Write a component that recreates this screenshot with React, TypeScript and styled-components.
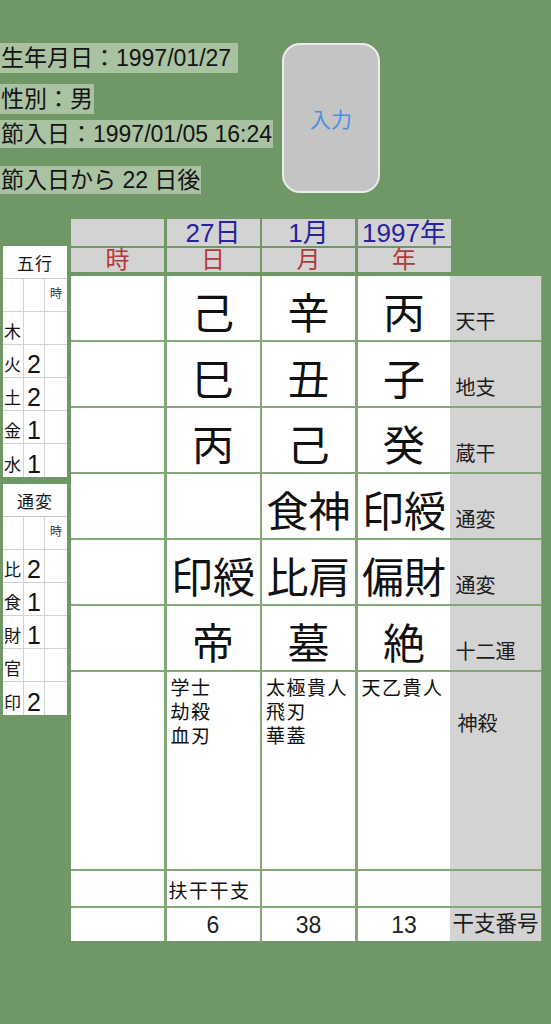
import styled, { createGlobalStyle } from 'styled-components';

const GlobalStyle = createGlobalStyle`
  html, body {
    margin: 0;
    padding: 0;
    background: #6f9866;
  }
  body {
    font-family: 'Liberation Sans', 'Noto Sans CJK JP', sans-serif;
    color: #141414;
  }
  * {
    box-sizing: border-box;
  }
`;

const header = ['', '27日', '1月', '1997年'];
const pillars = ['時', '日', '月', '年'];

const bigRows = [
	{ cells: ['', '己', '辛', '丙'], label: '天干' },
	{ cells: ['', '巳', '丑', '子'], label: '地支' },
	{ cells: ['', '丙', '己', '癸'], label: '蔵干' },
	{ cells: ['', '', '食神', '印綬'], label: '通変' },
	{ cells: ['', '印綬', '比肩', '偏財'], label: '通変' },
	{ cells: ['', '帝', '墓', '絶'], label: '十二運' },
];

const shinsatsu = [[], ['学士', '劫殺', '血刃'], ['太極貴人', '飛刃', '華蓋'], ['天乙貴人']];
const fukan = ['', '扶干干支', '', ''];
const numbers = ['', '6', '38', '13'];

const gogyo = [
	['木', ''],
	['火', '2'],
	['土', '2'],
	['金', '1'],
	['水', '1'],
];

const tsuhen = [
	['比', '2'],
	['食', '1'],
	['財', '1'],
	['官', ''],
	['印', '2'],
];

type SideProps = {
	title: string;
	items: string[][];
};

const SideTable = ({ title, items }: SideProps) => {
	return (
		<SideBox>
			<SideHead>{title}</SideHead>
			<SideGrid>
				<SideCell />
				<SideCell />
				<SideCell $small>時</SideCell>
				{items.map(([name, count]) => (
					<>
						<SideCell key={name}>{name}</SideCell>
						<SideCell $count>{count}</SideCell>
						<SideCell />
					</>
				))}
			</SideGrid>
		</SideBox>
	);
};

const App = () => {
	return (
		<>
			<GlobalStyle />
			<Page>
				<TopSection>
					<InfoColumn>
						<InfoLine $mt={0} $pr={7}>
							生年月日：1997/01/27
						</InfoLine>
						<InfoLine $mt={11}>性別：男</InfoLine>
						<InfoLine $mt={6} $h={28}>
							節入日：1997/01/05 16:24
						</InfoLine>
						<InfoLine $mt={18} $h={28}>
							節入日から 22 日後
						</InfoLine>
					</InfoColumn>
					<InputButton>入力</InputButton>
				</TopSection>

				<MainSection>
					<LeftColumn>
						<SideTable title='五行' items={gogyo} />
						<SideTable title='通変' items={tsuhen} />
					</LeftColumn>

					<Table>
						<HeadRow>
							{header.map((h, i) => (
								<DateCell key={i}>{h}</DateCell>
							))}
						</HeadRow>
						<PillarRow>
							{pillars.map((p) => (
								<PillarCell key={p}>{p}</PillarCell>
							))}
						</PillarRow>

						<Body>
							{bigRows.map((row, r) => (
								<Row key={r} $h={64}>
									<Cells>
										{row.cells.map((c, i) => (
											<BigCell key={i}>{c}</BigCell>
										))}
									</Cells>
									<Label $pt={34}>{row.label}</Label>
								</Row>
							))}

							<Row $h={197}>
								<Cells>
									{shinsatsu.map((list, i) => (
										<ListCell key={i}>
											{list.map((s) => (
												<div key={s}>{s}</div>
											))}
										</ListCell>
									))}
								</Cells>
								<Label $pt={40} $pl={8}>
									神殺
								</Label>
							</Row>

							<Row $h={35}>
								<Cells>
									{fukan.map((f, i) => (
										<TextCell key={i}>{f}</TextCell>
									))}
								</Cells>
								<Label $pt={5} />
							</Row>

							<Row $h={33}>
								<Cells>
									{numbers.map((n, i) => (
										<NumberCell key={i}>{n}</NumberCell>
									))}
								</Cells>
								<Label $pt={4} $pl={3} $size={21.5}>
									干支番号
								</Label>
							</Row>
						</Body>
					</Table>
				</MainSection>
			</Page>
		</>
	);
};

export default App;

const Page = styled.div`
	width: 551px;
	min-height: 1024px;
	padding-top: 43px;
	background: #6f9866;
`;

const TopSection = styled.div`
	display: flex;
	align-items: flex-start;
`;

const InfoColumn = styled.div`
	width: 282px;
	display: flex;
	flex-direction: column;
	align-items: flex-start;
`;

const InfoLine = styled.div<{ $mt: number; $h?: number; $pr?: number }>`
	margin-top: ${(p) => p.$mt}px;
	height: ${(p) => p.$h ?? 30}px;
	line-height: ${(p) => p.$h ?? 30}px;
	padding: 0 ${(p) => p.$pr ?? 1}px 0 1px;
	font-size: 23px;
	white-space: nowrap;
	background: #a9c2a1;
	color: #141414;
`;

const InputButton = styled.div`
	width: 98px;
	height: 150px;
	display: flex;
	justify-content: center;
	align-items: center;
	border: 2px solid #ececec;
	border-radius: 18px;
	background: #c4c4c4;
	color: #4a8fe0;
	font-size: 21px;
`;

const MainSection = styled.div`
	display: flex;
	align-items: flex-start;
	gap: 4px;
	margin-top: 25px;
	padding-left: 3px;
`;

const LeftColumn = styled.div`
	display: flex;
	flex-direction: column;
	gap: 7px;
	margin-top: 27px;
`;

const SideBox = styled.div`
	width: 64px;
	background: #ffffff;
`;

const SideHead = styled.div`
	height: 33px;
	display: flex;
	justify-content: center;
	align-items: center;
	border-bottom: 1px solid #c8c8c8;
	font-size: 17px;
	letter-spacing: 1px;
`;

const SideGrid = styled.div`
	display: grid;
	grid-template-columns: 21px 21px 22px;
	grid-auto-rows: 33px;
`;

const SideCell = styled.div<{ $small?: boolean; $count?: boolean }>`
	display: flex;
	align-items: ${(p) => (p.$small ? 'center' : 'flex-end')};
	justify-content: ${(p) => (p.$count || p.$small ? 'center' : 'flex-start')};
	padding-bottom: ${(p) => (p.$count ? 0 : 3)}px;
	padding-left: ${(p) => (p.$count || p.$small ? 0 : 1)}px;
	border-right: 1px solid #d2d2d2;
	border-bottom: 1px solid #d2d2d2;
	font-size: ${(p) => (p.$small ? 12 : p.$count ? 25 : 17)}px;
	line-height: 1;
	color: ${(p) => (p.$small ? '#333' : '#141414')};

	&:nth-child(3n) {
		border-right: none;
	}
	&:nth-last-child(-n + 3) {
		border-bottom: none;
	}
`;

const Table = styled.div`
	width: 471px;
	display: flex;
	flex-direction: column;
`;

const HeadRow = styled.div`
	display: grid;
	grid-template-columns: repeat(4, 93px);
	column-gap: 2.5px;
	height: 26.5px;
`;

const DateCell = styled.div`
	display: flex;
	justify-content: center;
	align-items: flex-end;
	background: #d3d3d3;
	color: #25249a;
	font-size: 26px;
	line-height: 1;
	white-space: nowrap;
	overflow: visible;
`;

const PillarRow = styled(HeadRow)`
	height: 24px;
	margin-top: 2.5px;
`;

const PillarCell = styled.div`
	display: flex;
	justify-content: center;
	align-items: center;
	background: #d3d3d3;
	color: #b23a3c;
	font-size: 24px;
	line-height: 1;
`;

const Body = styled.div`
	display: flex;
	flex-direction: column;
	gap: 2px;
	margin-top: 4px;
	background: #82a877;
`;

const Row = styled.div<{ $h: number }>`
	display: flex;
	height: ${(p) => p.$h}px;
`;

const Cells = styled.div`
	display: grid;
	grid-template-columns: repeat(4, 93px);
	column-gap: 2.5px;
`;

const Cell = styled.div`
	background: #ffffff;
	color: #111;
`;

const BigCell = styled(Cell)`
	display: flex;
	justify-content: center;
	align-items: center;
	padding-top: 14px;
	font-size: 42px;
	line-height: 1;
	white-space: nowrap;
`;

const ListCell = styled(Cell)`
	padding: 5px 0 0 4px;
	font-size: 19px;
	line-height: 24px;
	letter-spacing: 1.5px;
	white-space: nowrap;
`;

const TextCell = styled(Cell)`
	display: flex;
	align-items: center;
	padding: 2px 0 0 2px;
	font-size: 19px;
	letter-spacing: 1.5px;
	white-space: nowrap;
`;

const NumberCell = styled(Cell)`
	display: flex;
	justify-content: center;
	align-items: center;
	padding-top: 2px;
	font-size: 23px;
	color: #222;
`;

const Label = styled.div<{ $pt: number; $pl?: number; $size?: number }>`
	width: 91px;
	margin-left: -1px;
	padding-top: ${(p) => p.$pt}px;
	padding-left: ${(p) => p.$pl ?? 6}px;
	background: #d3d3d3;
	font-size: ${(p) => p.$size ?? 20}px;
	line-height: 24px;
	white-space: nowrap;
	color: #1c1c1c;
`;
